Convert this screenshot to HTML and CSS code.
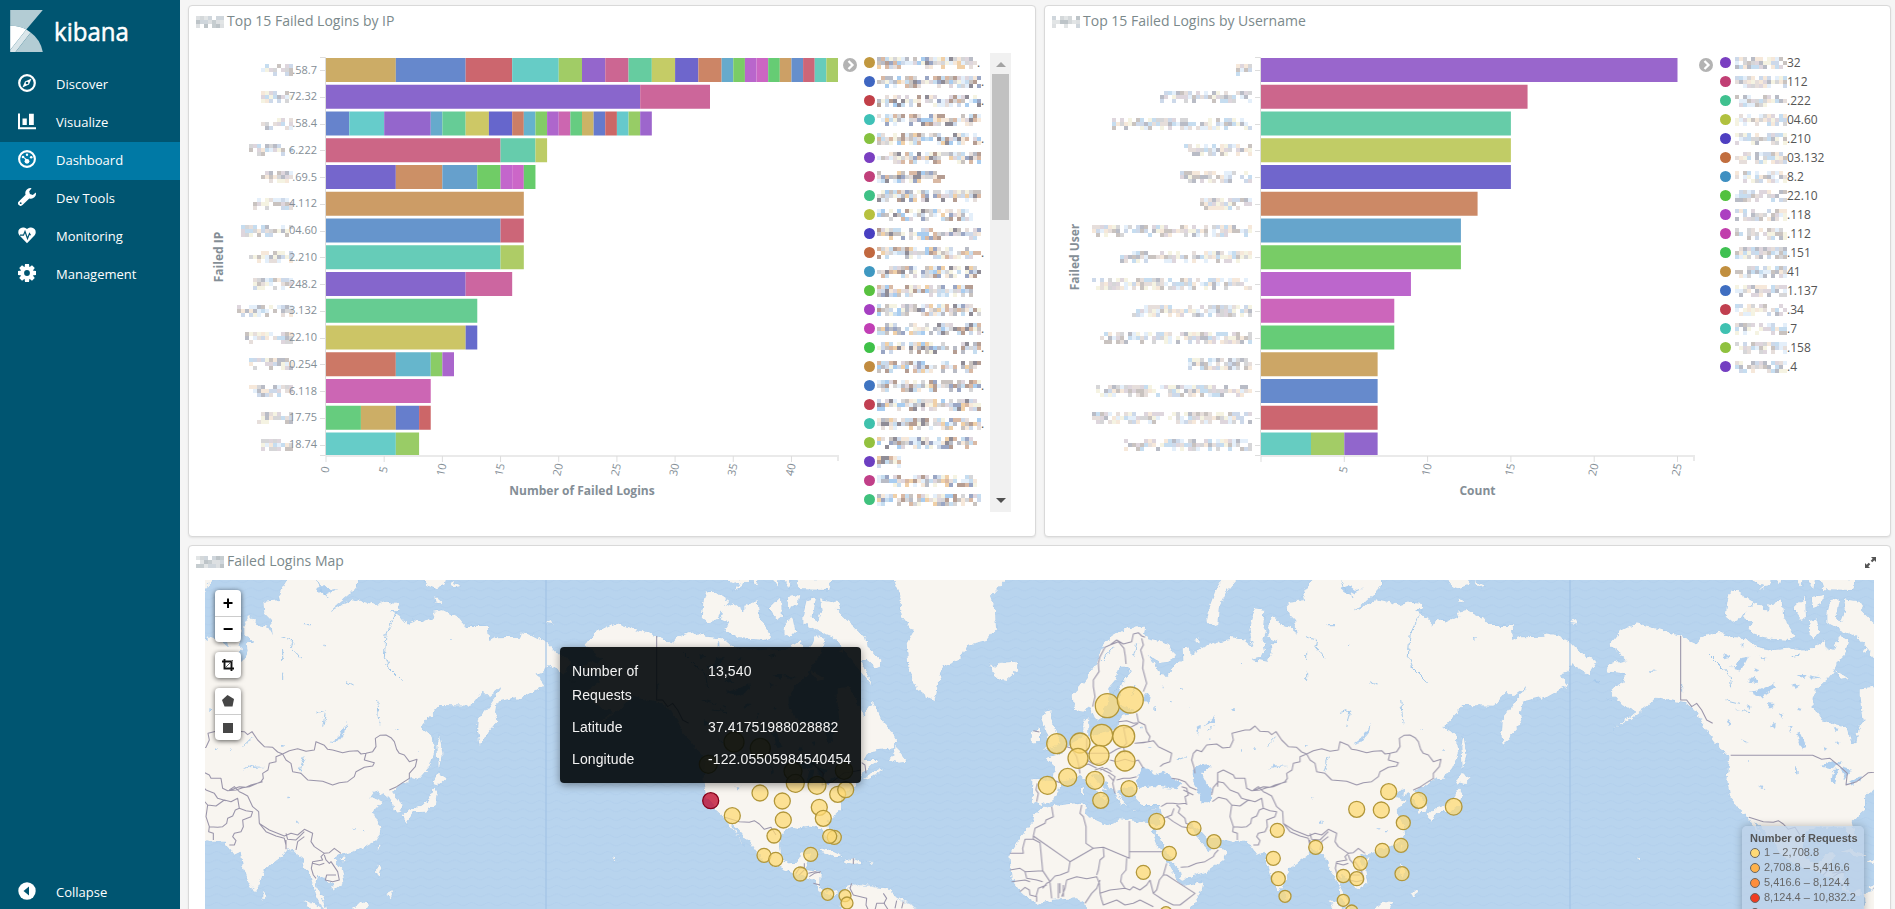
FILE: index.html
```html
<!DOCTYPE html>
<html lang="en">
<head>
<meta charset="utf-8">
<title>Kibana</title>
<link rel="stylesheet" href="styles.css">
</head>
<body>
<div class="app">
  <nav class="sidebar">
    <div class="brand">
      <svg class="brand-mark" viewBox="30 30 97 125"><path d="M30 30H127L78 88Q56 76 30 77Z" fill="#b3ccd4"/><path d="M30 77Q56 76 78 88L30 149Z" fill="#fff"/><path d="M78 88L91 97L46 155H30V149Z" fill="#dae6ea"/><path d="M91 97Q120 118 127 155H46Z" fill="#b3ccd4"/></svg>
      <svg class="brand-name" viewBox="0 0 90 40"><text x="0" y="26" textLength="75" lengthAdjust="spacingAndGlyphs">kibana</text></svg>
    </div>
    <a class="nav-item"><svg viewBox="0 0 18 18"><circle cx="9" cy="9" r="7.8" fill="none" stroke="#fff" stroke-width="2.2"/><path d="M13.6 4.4L11 10.6 4.4 13.6 7 7.4Z" fill="#fff"/><circle cx="9" cy="9" r="1.3" fill="#005571"/></svg><span>Discover</span></a>
    <a class="nav-item"><svg viewBox="0 0 18 18"><path d="M0 1.5H2V15.2H18V17.2H0ZM4.5 6.5H8.8V13H4.5ZM11 1.8H15.8V13H11Z" fill="#fff"/></svg><span>Visualize</span></a>
    <a class="nav-item active"><svg viewBox="0 0 18 18"><circle cx="9" cy="9" r="7.9" fill="none" stroke="#fff" stroke-width="2.1"/><g fill="#fff"><circle cx="9" cy="4.8" r="1.2"/><circle cx="5" cy="7" r="1.3"/><circle cx="13.2" cy="7.2" r="1.3"/><circle cx="9" cy="11.3" r="2.4"/><path d="M4.4 6L10 10 8.6 11.6Z"/></g></svg><span>Dashboard</span></a>
    <a class="nav-item"><svg viewBox="0 0 18 18"><path d="M13.6 .2A5 5 0 0 0 7.6 6.7L.8 13.4A2.5 2.5 0 0 0 4.5 17.1L11.3 10.4A5 5 0 0 0 17.8 4.4L14.8 6.9 11.9 6.1 11.2 3.2Z" fill="#fff"/><circle cx="2.7" cy="15.2" r=".9" fill="#005571"/></svg><span>Dev Tools</span></a>
    <a class="nav-item"><svg viewBox="0 0 18 18"><path d="M9 17.2L1.3 9.2C-1.8 5 2.5-1.2 9 3 15.500-1.2 19.800 5 16.700 9.200Z" fill="#fff"/><path d="M2 9.200H5.500L7 5.500 9.500 12.500 11.500 7.500 12.500 9.200" fill="none" stroke="#005571" stroke-width="1.200"/></svg><span>Monitoring</span></a>
    <a class="nav-item"><svg viewBox="-9 -9 18 18"><g fill="#fff"><circle r="6.500"/><path id="tooth" d="M-2-9H2L2.500-5H-2.500Z"/><use href="#tooth" transform="rotate(45)"/><use href="#tooth" transform="rotate(90)"/><use href="#tooth" transform="rotate(135)"/><use href="#tooth" transform="rotate(180)"/><use href="#tooth" transform="rotate(225)"/><use href="#tooth" transform="rotate(270)"/><use href="#tooth" transform="rotate(315)"/></g><circle r="2.900" fill="#005571"/></svg><span>Management</span></a>
    <a class="nav-item collapse"><svg viewBox="0 0 18 18"><circle cx="9" cy="9" r="8.700" fill="#fff"/><path d="M11 4.500V13.500L5.500 9Z" fill="#005571"/></svg><span>Collapse</span></a>
  </nav>

  <main class="dashboard">
    <section class="panel">
      <header class="panel-head"><svg class="mask" data-cols="7"></svg><span>Top 15 Failed Logins by IP</span></header>
      <div class="panel-body">
        <svg class="chart" id="chart-ip" viewBox="189 33 673 500"></svg>
        <ul class="legend" id="legend-ip"></ul>
        <div class="scrollbar"><i class="up"></i><i class="thumb"></i><i class="down"></i></div>
      </div>
    </section>
    <section class="panel">
      <header class="panel-head"><svg class="mask" data-cols="7"></svg><span>Top 15 Failed Logins by Username</span></header>
      <div class="panel-body">
        <svg class="chart" id="chart-user" viewBox="1045 33 673 500"></svg>
        <ul class="legend wide" id="legend-user"></ul>
      </div>
    </section>
    <section class="panel map-panel">
      <header class="panel-head"><svg class="mask" data-cols="7"></svg><span>Failed Logins Map</span>
        <svg class="expand" viewBox="0 0 11 11"><path d="M6 0H11V5L9.300 3.300 7.300 5.300 5.700 3.700 7.700 1.700ZM0 6L1.700 7.700 3.700 5.700 5.300 7.300 3.300 9.300 5 11H0Z" fill="#555"/></svg></header>
      <div class="map">
        <svg class="world" viewBox="205 580 1669 329">
          <defs>
            <filter id="rough" x="0" y="0" width="1" height="1"><feTurbulence type="fractalNoise" baseFrequency=".17" numOctaves="3" seed="4"/><feDisplacementMap in="SourceGraphic" scale="6" xChannelSelector="R" yChannelSelector="G"/></filter>
            <pattern id="waves" width="17" height="8.500" patternUnits="userSpaceOnUse"><path d="M0 3Q4.250 6 8.500 3T17 3" fill="none" stroke="#b1ceeb" stroke-width=".8"/></pattern>
            <g id="old-world" transform="translate(1000 560) scale(.33333)">
              <g class="land">
                <path d="M222 450L218 405 240 380 262 352 290 310 305 262 335 228 375 205 410 198 435 208 432 222 445 235 478 243 510 258 525 288 512 305 480 308 455 292 440 285 462 310 470 325 480 345 500 347 515 335 520 315 550 300 548 265 570 262 572 285 610 262 650 248 690 240 695 228 735 240 760 262 748 210 765 145 793 150 790 200 798 215 788 240 795 270 785 290 755 296 800 305 815 275 812 250 835 248 840 285 832 245 805 230 805 190 820 165 845 195 875 200 890 225 885 180 865 160 862 125 915 120 910 100 940 50 1143 50 1143 80 1120 105 1060 155 1130 118 1165 125 1200 135 1230 125 1262 128 1268 150 1245 150 1275 170 1300 198 1310 180 1345 185 1375 170 1370 155 1400 150 1450 175 1470 198 1535 198 1540 240 1555 232 1630 230 1634 220 1670 225 1710 245 1750 285 1790 305 1765 342 1715 312 1705 335 1680 340 1705 375 1625 420 1620 412 1565 425 1560 460 1565 485 1535 520 1512 558 1503 515 1505 480 1540 435 1578 380 1540 410 1520 392 1490 430 1480 437 1390 435 1330 505 1350 512 1370 530 1375 575 1360 620 1325 660 1305 655 1270 680 1245 692 1268 718 1278 740 1275 755 1258 758 1252 735 1240 715 1222 700 1210 708 1212 690 1195 695 1180 715 1196 715 1217 725 1190 755 1212 800 1215 820 1196 845 1169 860 1121 878 1089 885 1073 895 1099 930 1105 965 1073 990 1067 975 1046 955 1024 945 1017 975 1040 1015 1053 1060 1035 1040 1019 1000 1008 955 987 925 979 895 955 875 933 865 923 885 864 930 858 960 837 998 816 960 799 910 794 875 773 885 751 855 746 845 698 845 655 835 625 838 600 810 570 790 568 800 590 825 605 850 625 870 648 865 683 870 670 900 620 935 545 960 540 935 505 885 470 820 466 800 482 790 485 760 480 735 425 735 405 712 408 690 385 680 350 690 360 712 385 738 360 730 345 700 325 675 300 645 288 642 275 645 290 665 325 692 308 688 312 702 303 712 290 690 262 668 240 645 215 660 180 665 175 690 160 720 125 738 98 725 100 660 160 662 165 620 137 595 185 580 215 550 250 530 250 480 265 475 265 530 350 510 355 485 365 465 410 455 355 435 360 400 370 360 390 340 385 320 360 320 345 360 325 385 325 420 310 455 300 480 285 475 270 440 250 455Z"/>
                <path d="M125 745L160 738 240 728 258 735 255 765 320 795 345 790 360 775 440 788 468 800 455 812 475 860 510 920 535 965 545 978 608 965 600 1000 560 1060H260L255 1030 230 1015 150 1020 110 1030 65 1000 35 960 28 885 55 840 95 790 100 765Z"/>
                <path d="M135 455L152 450 150 475 175 530 185 550 130 570 150 545 135 500 125 475ZM92 520L120 505V545L92 548ZM-32 310L-20 325 0 308 50 305 55 330 20 360-15 352ZM675 50H720L680 95 660 140 655 195 640 200 618 180 625 150 645 95ZM1705 188L1725 180 1730 192ZM1390 525L1400 585 1388 625 1384 560ZM1385 638L1412 655 1390 675 1368 668ZM1375 685L1385 700 1380 735 1350 755 1310 757 1290 790 1282 765 1300 748 1340 735 1365 710ZM1206 850L1212 855 1205 875ZM1092 895L1110 892 1100 908ZM1203 908L1215 930 1208 955 1200 935ZM1230 1002L1252 990 1245 1012ZM862 990L873 1010 862 1020ZM985 1020L1010 1030 1050 1060H1010ZM1115 1060L1150 1025 1180 1030 1160 1060ZM1345 55H1410L1405 75 1375 85 1350 75ZM1422 62L1458 78 1435 82ZM1375 110L1398 130 1378 128ZM585 240L598 235 595 248ZM300 712L322 710 315 722ZM246 680L255 678 254 702 246 702ZM395 748L415 750 400 754ZM455 750L470 744 465 752Z"/>
              </g>
              <g class="water">
                <path d="M408 660L430 620 455 628 465 645 490 635 515 650 545 672 530 688 460 678 415 685ZM575 635L590 618 625 612 632 625 605 640 618 665 635 690 632 728 605 725 595 690 580 665ZM1112 488L1108 515 1085 545 1060 553 1085 535 1100 510ZM800 630L820 616 870 618 820 622ZM430 395L450 405 445 430 430 420ZM1020 85L1045 75 1065 90 1090 85 1045 105 1030 95ZM590 500L600 495 595 525ZM612 500L645 465 640 485Z"/>
                <path d="M1262 155L1230 225 1225 290 1240 325 1280 365M640 500L625 510M915 230L950 240 945 260 975 295M920 270V300M920 335V360M1205 420L1212 490M1020 460L1050 450 1040 500M985 590L970 640M800 560L830 530M560 590L530 600M1025 60L1040 100 1060 110M1110 365L1130 375M340 260L310 300M410 250L400 290M380 350L340 400M405 375L395 405" fill="none" class="stream"/>
                <path d="M725 306h6v6h-6ZM1045 254h5v5h-5ZM1422 234h5v5h-5ZM915 555h8v5h-8ZM760 565h7v5h-7ZM720 568h5v8h-5ZM1262 508h6v5h-6ZM937 710h5v5h-5ZM1130 805h8v5h-8ZM960 785h8v6h-8ZM1158 810h5v4h-5ZM625 535h6v5h-6ZM700 448h5v5h-5ZM540 385h5v5h-5ZM485 380h6v5h-6ZM460 445h5v5h-5ZM510 420h5v4h-5ZM570 440h5v4h-5ZM445 565h6v5h-6ZM420 500h5v5h-5ZM1330 570h5v5h-5ZM980 192h25v4h-25Z"/>
              </g>
            </g>
            <g id="old-borders" transform="translate(1000 560) scale(.33333)">
              <path class="border" d="M585 640L582 622 575 600 580 580 590 570 605 575 620 555 650 552 668 564 690 562 700 540 696 520 735 510 750 510 765 498 780 514 805 515 815 524 828 515 845 540 865 560 890 562 905 576 920 582 940 572 965 566 990 574 1015 570 1020 545 1045 556 1055 568 1070 570 1100 578 1120 574 1145 572 1155 582 1170 580 1190 575 1200 560 1198 535 1212 526 1230 525 1245 533 1255 545 1262 568 1270 580 1285 585 1300 605 1323 598 1318 620 1300 640 1300 655 1280 668 1262 680 1240 690M1170 580L1165 600 1195 608 1190 618 1165 622 1140 635 1135 650 1115 665 1090 668 1070 675 1040 664 995 660 975 640 950 635 945 610 930 600 920 582 900 590 900 605 880 610 876 630 860 640 862 655 855 665 820 680 800 683 780 690 755 692 740 685 735 655 705 655 700 645 670 630 653 638V680M635 705L640 682 655 665 670 668 690 690 715 700 725 715 750 722M637 725L655 712 680 718 695 735 690 770 700 800 725 802 740 800 752 790 755 775 770 768 778 750 790 745 785 715 765 725 745 720 720 738 695 735M700 800L698 815 712 820 712 840M790 745L810 752 830 755 825 770 800 780 802 800 795 815 775 820 770 830 780 842 775 855 760 855M760 690L775 680 790 695 800 700 815 708 830 740 848 755 850 790 880 810 925 828 945 820 965 825 985 808 1010 820 1005 845 1015 860 1045 880 1035 890 1040 900 1010 905 1006 925 1012 945 1020 955M850 790L870 815 900 828 925 835 930 855M930 820L935 838 960 840 970 830 985 815M985 830L965 845 960 870M930 840V868M1045 880L1060 878 1075 865 1095 880M1045 885L1050 900 1060 910 1065 905 1085 935 1090 960 1070 965 1048 960 1052 945 1080 945M1010 910L1030 915 1045 910M765 690L780 684 790 680 810 682 825 675 860 665M483 740L500 730 520 730 535 732 560 730M490 775L515 765 522 745M500 770L520 785 545 800 575 805M530 735L540 745 535 758 555 775 558 790 570 795M515 655L535 658 555 665 570 682 590 690M545 680L560 685 565 705 555 710 560 735M550 690L580 705M542 922L565 920 590 910 615 905 640 890 645 880 655 870M155 740L160 770 138 780 135 790 105 805 100 828 210 905M30 880H70L68 865 75 838H100M120 848L128 932 75 935M100 828V838L120 848M245 735L240 760 250 770 258 800V850L280 865 210 905 205 935 180 945 165 948 150 965 140 970 128 985M388 783V895L310 862 280 865M388 875H490M310 865L312 890 300 900 295 930 290 945M380 895L378 930 365 945 362 965 375 985 390 990 400 980 420 990 440 975 450 960M450 960L460 1000 490 1020 520 1035 540 1035 585 1000 530 965 500 945 490 945 478 960 470 990 460 1000M500 910L490 945M200 960L230 950 260 956 290 950 298 970 300 1000 330 990 350 988 375 985M300 1000L305 1020 310 1035 350 1020 375 1035 400 1030 420 1020 460 1040M30 930L60 925 75 935 80 955 110 960 128 965M35 965L75 960 90 965M128 932L150 965M60 995L75 982 88 990 90 1005 110 1010V1025M108 1010L115 985 140 975M150 968L155 1015M175 970V1015M190 975V1010M180 1000V970M200 960L195 985 185 1010M255 1030L275 1000 290 985 300 960M278 440L285 410 280 380 280 360 297 335 295 310 300 290 315 262 330 255 355 245 372 265 376 290 378 312M330 255L350 240 370 252 395 245 400 222 415 218 425 228 435 232M425 235L430 255 422 270 430 300 428 325 440 370 430 395M410 460L415 485 435 495 440 515 450 530 445 545 405 550 430 548 460 542 475 560 500 572 515 580 510 605 490 612 480 620M355 485L380 482 400 490 415 488M370 505L395 500 415 490M200 560L215 565 230 590 235 610 240 640M260 535V580L330 580 350 568 370 560M370 500L375 525 380 550 370 560 375 580M260 600L280 612 300 610 325 598M330 600L350 605 375 598 400 605 415 600 430 625M310 630L330 640 345 650 338 670 345 700M350 660L370 655 390 655 410 650M300 630L320 625 335 635M325 645L340 662M112 670L108 690 115 700 110 725M100 512L118 516M165 662L180 668M240 620L265 612 290 625M285 630L310 622"/>
            </g>
            <g id="new-world">
              <g transform="translate(1440 540) scale(.33333)">
                <path class="land" d="M590 250L640 262 722 288 770 310 785 290 835 275 870 290 920 295 950 320 1000 330 1060 325 1110 330 1155 300 1160 325 1180 330 1200 285 1225 300 1215 345 1200 360 1180 395 1160 420 1135 440 1118 470V500L1145 540 1222 562 1235 610 1250 605 1255 570 1270 540 1262 470V445L1302 440 1342 530 1372 485 1397 540 1447 600 1432 625 1372 632 1340 660 1385 660 1350 690 1312 740 1275 770V810L1235 845 1247 895 1235 900 1217 865 1182 860 1152 865 1127 860 1097 880 1092 920 1097 955 1117 970 1142 968 1157 940 1185 940 1175 975 1165 990 1215 995 1212 1040 1230 1055 1265 1050V1065H1240L1215 1055 1195 1020 1150 1005 1110 990 1040 960 1020 935 1000 905 970 870 945 845 960 880 988 920 965 890 935 850 925 832 900 810 870 770 862 720 870 655 840 625 800 575 765 510 735 490 690 480 650 470 620 500 560 545 520 570 590 515 545 495 510 450 550 430 555 400 505 395 500 375 560 360 508 315 540 275ZM870 155L890 152 940 185 920 210 905 235 878 248 857 230 862 185ZM920 205L950 190 985 215V195L1005 190 1025 180 1030 230 1065 290 1050 300 970 295 925 270 940 245 915 235ZM1065 200L1095 170 1098 230 1085 240 1065 215ZM1115 170L1150 165 1145 190 1120 205ZM1110 240L1130 235 1138 275 1120 295 1105 280ZM920 115H1000L990 130 950 152 970 135ZM1010 115H1025L1020 135ZM1068 115H1088L1085 140ZM1100 115H1125L1120 145ZM1140 115H1248L1240 150 1150 148ZM1265 330L1285 325 1280 342ZM1185 390L1225 415 1200 420ZM1290 1040L1320 1030 1400 1045 1500 1100H1270ZM460 420L480 425ZM500 480L512 484ZM590 952L603 958 598 964Z"/>
                <g class="water"><path d="M1140 680L1175 660 1205 670 1180 685ZM1180 690L1195 688 1185 735 1175 720ZM1200 680L1235 690 1215 715ZM1220 735L1245 715 1270 712 1240 730ZM1068 580L1080 575 1100 620 1085 625ZM930 455L960 450 1000 430 1005 445 965 470ZM870 375L890 375 900 355 925 350 905 390 885 385ZM958 738L970 740 968 748ZM940 410L955 430 925 425ZM1065 678h5v25h-5ZM925 660h5v8h-5ZM905 310h5v12h-5ZM850 345l20 8-18 5ZM1070 405l30 0-10 12ZM1060 430l20 5-15 10ZM1105 405l40 8-30 3ZM985 490l22 2-10 10-14 4ZM1070 500l20 4-16 8ZM990 560l18-12-4 22ZM1020 520l14 4-10 9ZM1045 560l10 2-4 12ZM905 595l18 16-8-2ZM860 540l20 10-14 8ZM1180 560l18 4-10 10ZM1150 620l12 6-12 6ZM1185 610l14-4-4 12ZM960 350l22 4-8 8ZM920 495l12 4-8 8ZM630 390l22 4-20 2ZM940 385l20 6-15 4Z"/><path class="stream" fill="none" d="M805 340L850 385 870 410 875 445M1225 180L1215 260M725 430V455M1055 350L1080 345M860 480L900 490M890 510L930 515"/></g>
              </g>
              <g transform="translate(1724 560) scale(.33333)">
                <path class="land" d="M578 50L600 100 605 170 640 215 620 250 625 320 650 385 690 415 705 420 715 370 730 320 780 300 800 255 860 240 888 205 885 150 870 110 925 50ZM310 160L320 120 345 115 335 170 350 190 365 150 360 118 410 125 420 140 410 150 440 180 495 230 500 260 545 300 530 325 500 300 480 300 520 380 480 330 440 280 400 230 360 215 310 190ZM570 600L590 560 600 580 620 605 600 608ZM485 655L530 632 550 628 530 645 495 658ZM352 875L380 866 432 890 400 892 375 878ZM430 905L455 895 490 908 460 912ZM500 908H514V912ZM415 1005L450 985 470 970 475 978 560 985 600 1020 635 1035 660 1060H418L425 1020Z"/>
              </g>
            </g>
            <g id="new-borders">
              <path transform="translate(1440 540) scale(.33333)" class="border" d="M722 288V480H740L755 500 770 490 785 510 800 540 818 550M872 646H1118L1145 658 1170 655 1200 680 1222 700 1218 735 1250 725 1270 710 1285 698 1302 697 1335 690M927 832L970 845 1000 847 1015 842 1030 852 1045 868 1065 862 1080 885M1140 1000L1150 985 1165 985V970M1165 990L1150 1005M1180 1010L1195 1000 1215 995"/>
              <path transform="translate(1724 560) scale(.33333)" class="border" d="M455 970L450 985 460 1005 500 1015 498 1035 505 1050M525 1050L530 1030 555 1030M550 1000L560 1015 552 1030 565 1050M585 1045L590 1022M605 1045L610 1025M460 895V912M325 940L345 935 360 938M340 970L360 975M485 608L495 615 498 640"/>
            </g>
          </defs>
          <rect x="205" y="580" width="1669" height="329" fill="#b8d4ee"/>
          <rect x="205" y="580" width="1669" height="329" fill="url(#waves)"/>
          <g filter="url(#rough)">
            <use href="#old-world"/><use href="#old-world" x="-1024"/><use href="#new-world"/><use href="#new-world" x="-1024"/>
          </g>
          <use href="#old-borders"/><use href="#old-borders" x="-1024"/><use href="#new-borders"/><use href="#new-borders" x="-1024"/>
          <path d="M546 580V909M1570 580V909" stroke="#a3c4e6" stroke-width="1.500" opacity=".8"/>
          <g id="markers"></g>
        </svg>
        <div class="controls">
          <div class="control"><b>+</b><b>−</b></div>
          <div class="control"><b><svg viewBox="0 0 12 12"><path d="M2.500 0V9.500H12M0 2.500H9.500V12" fill="none" stroke="#111" stroke-width="1.900"/><path d="M3 9L11 1" stroke="#444" stroke-width=".8"/></svg></b></div>
          <div class="control"><b><svg viewBox="0 0 12 12"><path d="M5.500 0L12 4 10.500 11.500H2.500L0 5Z" fill="#464646"/></svg></b><b><svg viewBox="0 0 12 12"><path d="M1 1H11V11H1Z" fill="#464646"/></svg></b></div>
        </div>
        <dl class="tip"><dt>Number of Requests</dt><dd>13,540</dd><dt>Latitude</dt><dd>37.41751988028882</dd><dt>Longitude</dt><dd>-122.05505984540454</dd></dl>
        <div class="map-legend">
          <h4>Number of Requests</h4>
          <p><i class="c1"></i>1 – 2,708.8</p><p><i class="c2"></i>2,708.8 – 5,416.6</p><p><i class="c3"></i>5,416.6 – 8,124.4</p><p><i class="c4"></i>8,124.4 – 10,832.2</p><p><i class="c5"></i></p>
        </div>
      </div>
    </section>
  </main>
</div>
<script src="app.js"></script>
</body>
</html>
```

FILE: styles.css
```css
* { box-sizing: border-box; }
body { margin: 0; font-family: "Open Sans", sans-serif; background: #f5f5f5; overflow: hidden; }
.app { display: flex; height: 909px; }
.sidebar { width: 180px; flex: none; background: #005571; display: flex; flex-direction: column; }
.brand { height: 66px; padding: 10px 0 0 10px; display: flex; gap: 13px; flex: none; }
.brand-mark { width: 33px; height: 42px; }
.brand-name { width: 90px; height: 40px; margin-left: -2px; margin-top: 5px; fill: #fff; font-size: 26px; font-weight: 400; stroke: #fff; stroke-width: .5px; }
.nav-item { height: 38px; flex: none; display: flex; align-items: center; gap: 20px; padding: 0 0 4px 18px; color: #fff; font-size: 13px; }
.nav-item svg { width: 18px; height: 18px; }
.nav-item span { padding-top: 2px; }
.nav-item.active { background: #0079a5; }
.nav-item.collapse { margin-top: auto; margin-bottom: -3px; }
.dashboard { flex: 1; min-width: 0; padding: 5px 3px 0 8px; display: grid; grid-template-columns: 848px 847px; grid-template-rows: 532px 400px; gap: 8px; overflow: hidden; }
.panel { background: #fff; border: 1px solid #d9d9d9; border-radius: 4px; box-shadow: 0 1px 2px rgba(0,0,0,.08); overflow: hidden; }
.map-panel { grid-column: 1 / 3; }
.panel-head { height: 27px; padding: 0 14px 0 7px; display: flex; align-items: center; gap: 3px; font-size: 14px; color: #7b898b; }
.panel-head span { padding-top: 1px; }
.panel-head .mask { width: 28px; height: 12px; margin-top: 5px; }
.panel-head .expand { width: 11px; height: 11px; margin-left: auto; margin-top: 6px; }
.panel-body { display: flex; }
.chart { width: 673px; height: 500px; flex: none; }
.chart text { font-size: 11px; fill: #848e96; }
.chart text.axis-title { font-size: 12px; font-weight: 700; }
.chart .axis { stroke: #ddd; stroke-width: 1; fill: none; }
.legend { list-style: none; margin: 20px 0 0 2px; padding: 0; width: 126px; height: 459px; overflow: hidden; font-size: 12px; color: #555; }
.legend.wide { width: 120px; margin-left: 2px; }
.legend li { height: 19px; display: flex; align-items: center; }
.legend i { width: 11px; height: 11px; border-radius: 50%; flex: none; }
.legend svg { height: 16px; margin-left: 2px; flex: none; }
.legend.wide svg { margin-left: 4px; }
.scrollbar { width: 21px; height: 459px; margin-top: 20px; background: #f1f1f1; display: flex; flex-direction: column; align-items: center; }
.scrollbar .up { border: 5px solid transparent; border-top: 0; border-bottom-color: #a3a3a3; margin: 9px 0 7px; }
.scrollbar .thumb { width: 17px; height: 146px; background: #c1c1c1; }
.scrollbar .down { border: 5px solid transparent; border-bottom: 0; border-top-color: #505050; margin: auto 0 9px; }
.map { position: relative; margin: 7px 16px 0; height: 329px; }
.world { display: block; width: 1669px; height: 329px; }
.land { fill: #f8f5f0; stroke: #a5c8eb; stroke-width: 2.5; paint-order: stroke; }
.water { fill: #b0cfee; }
.stream { stroke: #a5c9ea; stroke-width: 3; }
.border { fill: none; stroke: #9a95aa; stroke-width: 3.2; stroke-linejoin: round; }
.controls { position: absolute; left: 10px; top: 10px; display: flex; flex-direction: column; gap: 10px; }
.control { width: 26px; background: #fff; border-radius: 4px; box-shadow: 0 1px 5px rgba(0,0,0,.65); }
.control b { height: 26px; display: flex; align-items: center; justify-content: center; font: 700 18px "Liberation Sans", sans-serif; color: #000; }
.control b + b { height: 26px; border-top: 1px solid #ccc; }
.control svg { width: 12px; height: 12px; }
.tip { position: absolute; left: 355px; top: 67px; width: 301px; height: 136px; margin: 0; padding: 12px; background: rgba(0,5,8,.9); border-radius: 4px; box-shadow: 0 2px 8px rgba(0,0,0,.4); color: #f2f2f2; font: 14px/24px "Liberation Sans", sans-serif; display: grid; grid-template-columns: 136px 1fr; row-gap: 8px; align-content: start; }
.tip dt { width: 90px; letter-spacing: .1px; }
.tip dd { margin: 0; letter-spacing: .12px; }
.map-legend { position: absolute; left: 1537px; top: 246px; width: 122px; height: 92px; padding: 6px 8px; background: rgba(190,210,233,.8); border-radius: 5px; box-shadow: 0 0 8px rgba(0,0,0,.25); color: #666; font: 11px/15px "Liberation Sans", sans-serif; white-space: nowrap; }
.map-legend h4 { margin: 0; font-size: 11px; line-height: 13px; color: #555; }
.map-legend p { margin: 0; height: 15px; display: flex; align-items: center; gap: 4px; }
.map-legend i { width: 10px; height: 10px; border-radius: 50%; border: 1px solid; }
.c1 { background: #fed976; border-color: #b99b3a; }
.c2 { background: #feb24c; border-color: #b07010; }
.c3 { background: #fd8d3c; border-color: #a85210; }
.c4 { background: #f03b20; border-color: #9c1708; }
.c5 { background: #bd0026; border-color: #700010; }
```

FILE: app.js
```js
var seed = 7;
function rnd() { seed = (seed * 16807) % 2147483647; return seed / 2147483647; }
var soft = ['#d6d6d8', '#e6dedb', '#cdd9ea', '#f6e8da', '#b9bcc6', '#c6ddf0', '#e4effa', '#ded6dd', '#f5f3e2', '#c9c3c0', '#ffffff'];
var vivid = soft.concat(['#b59d92', '#9aa6c4', '#f0d0a8', '#a9cdf0', '#8f8c96', '#d9b9a4']);
var grey = ['#c6cdd0', '#d4d8da', '#bdc4c8', '#e2e5e6', '#cfd6dc', '#dde0e2'];

/* Redacted text: a strip of 4px cells, dense in its middle rows. */
function mask(x, y, cols, pal, rows) {
  var s = '';
  for (var r = 0; r < rows; r++) for (var c = 0; c < cols; c++) {
    var p = r === 1 ? 0.95 : r === 0 ? 0.75 : 0.6;
    if (rnd() < p) s += '<rect x="' + (x + c * 4) + '" y="' + (y + r * 4) + '" width="4" height="4" fill="' + pal[Math.floor(rnd() * pal.length)] + '"/>';
  }
  return s;
}
document.querySelectorAll('svg.mask').forEach(function (el) { el.innerHTML = mask(0, 0, 7, grey, 3); });

function chart(id, o) {
  var s = '', pitch = 26.75;
  o.rows.forEach(function (row, i) {
    var y = 58 + i * pitch, x = o.x0;
    row[2].forEach(function (seg) {
      s += '<rect x="' + x + '" y="' + y + '" width="' + seg[0] * o.unit + '" height="24" fill="#' + seg[1] + '"/>';
      x += seg[0] * o.unit;
    });
    s += '<path class="axis" d="M' + (o.x0 - 6) + ' ' + Math.round(y + 12) + '.5h5"/>';
    s += mask(o.maskEnd - row[0] * 4, Math.round(y) + 6, row[0], soft, 3);
    if (row[1]) s += '<text x="' + (o.x0 - 9) + '" y="' + (y + 15.5) + '" text-anchor="end">' + row[1] + '</text>';
  });
  s += '<path class="axis" d="M' + (o.x0 - 6) + ' 57.5h5.500V455.500h-5.500"/>';
  s += '<path d="M' + o.x0 + ' 456H' + o.end + 'v5" fill="none" stroke="#eaeaea" stroke-width="2"/>';
  o.ticks.forEach(function (t) {
    var x = o.x0 + t * o.unit;
    s += '<path d="M' + x + ' 456v6" stroke="#ddd"/>';
    if (t || o.zero) s += '<text transform="translate(' + (x + 1) + ' 470) rotate(-78)" text-anchor="middle" dy="2">' + t + '</text>';
  });
  s += '<text class="axis-title" x="' + (o.x0 + o.end) / 2 + '" y="495" text-anchor="middle">' + o.xTitle + '</text>';
  s += '<text class="axis-title" transform="translate(' + o.yx + ' 257) rotate(-90)" text-anchor="middle">' + o.yTitle + '</text>';
  s += '<circle cx="' + o.toggle + '" cy="65" r="7" fill="#b3b3b3"/><path d="M' + (o.toggle - 1.500) + ' 61l4 4-4 4" fill="none" stroke="#fff" stroke-width="2.300"/>';
  document.getElementById(id).innerHTML = s;
}
chart('chart-ip', { x0: 326, unit: 512 / 44, end: 838, maskEnd: 293, zero: true, ticks: [0, 5, 10, 15, 20, 25, 30, 35, 40], xTitle: 'Number of Failed Logins', yTitle: 'Failed IP', yx: 223, toggle: 850, rows: [
  [8, '.58.7', [[6,'ccac66'],[6,'6688cc'],[4,'cc666e'],[4,'66ccc6'],[2,'a1cc66'],[2,'9466cc'],[2,'cc6692'],[2,'66cca0'],[2,'c5cc66'],[2,'6e66cc'],[2,'cc8566'],[1,'66aacc'],[1,'7acc66'],[1,'b966cc'],[1,'cc66c3'],[1,'66cc74'],[1,'cca066'],[1,'668fcc'],[1,'cc6679'],[1,'66ccbc'],[1,'a9cc66']]],
  [8, '72.32', [[27,'8966cc'],[6,'cc669a']]],
  [8, '.58.4', [[2,'6683cc'],[3,'66cccb'],[4,'9466cc'],[1,'66aacc'],[2,'66cc96'],[2,'cdc866'],[2,'6666cc'],[1,'cc7e66'],[1,'66b2cc'],[1,'83cc66'],[1,'ae66cc'],[1,'cc66b0'],[1,'66cc81'],[1,'ccb366'],[1,'667acc'],[1,'cc6866'],[1,'66c9cc'],[1,'97cc66'],[1,'9d66cc']]],
  [11, '6.222', [[15,'cc6686'],[3,'66ccac'],[1,'bccc66']]],
  [8, '.69.5', [[6,'7566cc'],[4,'cc9066'],[3,'66a0cc'],[2,'70cc66'],[1,'c366cc'],[1,'cc66c8'],[1,'66cc6b']]],
  [10, '4.112', [[17,'cc9c66']]],
  [13, '04.60', [[15,'6695cc'],[2,'cc6678']]],
  [11, '2.210', [[15,'66ccb8'],[2,'aecc66']]],
  [10, '248.2', [[12,'8566cc'],[4,'cc66a0']]],
  [14, '3.132', [[13,'66cc92']]],
  [12, '22.10', [[12,'ccc566'],[1,'666bcc']]],
  [11, '0.254', [[6,'cc7866'],[3,'66b6cc'],[1,'8acc66'],[1,'aa66cc']]],
  [11, '6.118', [[9,'cc66b4']]],
  [9, '17.75', [[3,'66cc7e'],[3,'ccae66'],[2,'667ecc'],[1,'cc6668']]],
  [8, '18.74', [[6,'66ccc8'],[2,'99cc66']]]
] });
chart('chart-user', { x0: 1261, unit: 16.66, end: 1694, maskEnd: 1252, ticks: [0, 5, 10, 15, 20, 25], xTitle: 'Count', yTitle: 'Failed User', yx: 1079, toggle: 1706, rows: [
  [5, '', [[25,'9966cc']]], [23, '', [[16,'cc668c']]], [35, '', [[15,'66cca8']]], [17, '', [[15,'c1cc66']]], [18, '', [[15,'7066cc']]],
  [13, '', [[13,'cc8966']]], [40, '', [[12,'66a5cc']]], [33, '', [[12,'78cc66']]], [40, '', [[9,'bc66cc']]], [30, '', [[8,'cc66bb']]],
  [38, '', [[8,'66cc77']]], [16, '', [[7,'cca666']]], [39, '', [[7,'668acc']]], [40, '', [[7,'cc6670']]], [32, '', [[3,'66ccc1'],[2,'a3cc66'],[2,'9166cc']]]
] });

function legend(id, items, pal) {
  document.getElementById(id).innerHTML = items.map(function (it) {
    return '<li><i style="background:#' + it[0] + '"></i><svg width="' + it[1] * 4 + '" viewBox="0 0 ' + it[1] * 4 + ' 16">' + mask(0, 2, it[1], pal, 3) + '</svg>' + (it[2] || '') + '</li>';
  }).join('');
}
legend('legend-ip', [['c1983f',25,' .'],['3f66c1',26,'.'],['c13f48',26,'.'],['3fc1b7',26],['86c13f',26,'.'],['7a3fc1',26],['c13f7a',17],['3fc186',26],['b7c13f',24],['483fc1',26],['c1683f',26,'.'],['3f98c1',26],['58c13f',24],['a53fc1',26],['c13fb5',26,'.'],['3fc148',26,'.'],['c18b3f',26],['3f74c1',26,'.'],['c13f52',26],['3fc1ac',26,'.'],['93c13f',25],['6c3fc1',6],['c13f88',25],['3fc17d',26]], vivid);
legend('legend-user', [['7a3fc1',13,'32'],['c13f74',13,'112'],['3fc18f',13,'.222'],['b1c13f',13,'04.60'],['4f3fc1',13,'.210'],['c16e3f',13,'03.132'],['3f8fc1',13,'8.2'],['52c13f',13,'22.10'],['ac3fc1',13,'.118'],['c13fac',13,'.112'],['3fc152',13,'.151'],['c18f3f',13,'41'],['3f6ec1',13,'1.137'],['c13f4f',13,'.34'],['3fc1b1',13,'.7'],['8fc13f',13,'.158'],['743fc1',13,'.4']], soft);

/* Marker centre and radius in thirds of a pixel, from the map point (700, 560). */
var pts = [[102,546,30],[181,565,30],[25,613,27],[279,634,27],[432,632,26],[97,767,24],[180,699,24],[247,723,24],[250,780,24],[222,828,21],[286,670,27],[351,676,27],[413,703,24],[437,689,24],[358,742,24],[370,775,24],[403,832,21],[389,829,21],[332,883,21],[192,886,21],[227,898,21],[301,942,21],[383,1003,18],[435,1007,18],[441,1029,18],[1070,551,30],[1140,549,30],[1205,526,33],[1271,529,33],[1222,437,36],[1291,420,39],[1134,595,30],[1197,586,30],[1275,603,30],[1103,652,27],[1042,676,27],[1185,661,27],[1287,686,24],[1202,721,24],[1370,784,24],[1482,805,21],[1408,880,21],[1330,937,21],[1542,845,21],[1732,811,21],[1720,895,21],[1735,956,21],[1755,1009,18],[1847,862,21],[1970,748,24],[2044,750,24],[2066,695,24],[2156,721,24],[2261,740,25],[2110,788,21],[2103,856,21],[2047,871,21],[1981,910,21],[1930,948,20],[1970,956,21],[2106,941,21],[1930,1021,18],[1955,1053,18],[1398,1058,18],[32,722,24,1]];
document.getElementById('markers').innerHTML = pts.map(function (p) {
  return '<circle cx="' + (700 + p[0] / 3).toFixed(1) + '" cy="' + (560 + p[1] / 3).toFixed(1) + '" r="' + p[2] / 3 + '" fill="' + (p[3] ? '#bd0026' : '#fed976') + '" fill-opacity=".75" stroke="' + (p[3] ? '#84001a' : '#b2973a') + '" stroke-width="1.3"/>';
}).join('');
```
